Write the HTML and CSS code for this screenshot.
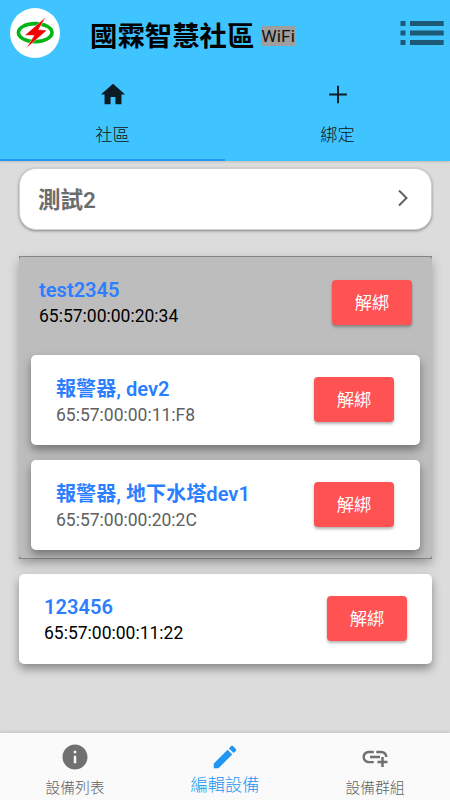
FILE: index.html
```html
<!DOCTYPE html>
<html lang="zh-Hant">
<head>
<meta charset="utf-8">
<meta name="viewport" content="width=device-width, initial-scale=1">
<title>國霖智慧社區</title>
<link rel="stylesheet" href="styles.css">
</head>
<body>
<header class="header">
  <div class="bar">
    <svg class="logo" viewBox="0 0 50 50">
      <circle cx="25" cy="25" r="25" fill="#fff"/>
      <ellipse cx="25.200" cy="24.600" rx="16.800" ry="9" fill="none" stroke="#00b414" stroke-width="3.600"/>
      <path d="M35.900 9 14.800 27.200 24 27.600 16.300 40.200 37 22.300 28.500 21.600z" fill="#f00000" stroke="#fff" stroke-width=".5"/>
    </svg>
    <h1 class="title">國霖智慧社區</h1>
    <span class="wifi">WiFi</span>
    <svg class="menu" viewBox="0 0 44 24">
      <path d="M.5 0h5v5h-5zM10 0h33.700v5H10zM.5 9.500h5v5h-5zM10 9.500h33.700v5H10zM.5 19h5v5h-5zM10 19h33.700v5H10z"/>
    </svg>
  </div>
  <nav class="tabs">
    <a class="tab tab-active">
      <svg class="tab-icon" viewBox="0 0 24 24"><path d="M10 20v-6h4v6h5v-8h3L12 3 2 12h3v8z"/></svg>
      <span>社區</span>
    </a>
    <a class="tab">
      <svg class="tab-icon" viewBox="0 0 24 24"><path d="M19.300 12.800h-6.500v6.500h-1.600v-6.500H4.700v-1.600h6.500V4.700h1.600v6.500h6.500z"/></svg>
      <span>綁定</span>
    </a>
  </nav>
</header>
<main class="content">
  <div class="selector">
    <span>測試2</span>
    <svg class="chevron" viewBox="0 0 12 18"><path d="M2 1.500 9.500 9 2 16.500"/></svg>
  </div>
  <section class="group">
    <div class="group-body">
      <div class="row group-head">
        <div><div class="name">test2345</div><div class="mac">65:57:00:00:20:34</div></div>
        <button class="unbind">解綁</button>
      </div>
      <div class="row card">
        <div class="info"><div class="name">報警器, dev2</div><div class="mac mac-muted">65:57:00:00:11:F8</div></div>
        <button class="unbind">解綁</button>
      </div>
      <div class="row card">
        <div class="info"><div class="name">報警器, 地下水塔dev1</div><div class="mac mac-muted">65:57:00:00:20:2C</div></div>
        <button class="unbind">解綁</button>
      </div>
    </div>
  </section>
  <div class="row card">
    <div class="info"><div class="name">123456</div><div class="mac">65:57:00:00:11:22</div></div>
    <button class="unbind">解綁</button>
  </div>
</main>
<nav class="bottom">
  <a class="item">
    <svg class="item-icon" viewBox="0 0 24 24"><path d="M12 2C6.480 2 2 6.480 2 12s4.480 10 10 10 10-4.480 10-10S17.520 2 12 2zm1 15h-2v-6h2v6zm0-8h-2V7h2v2z"/></svg>
    <span>設備列表</span>
  </a>
  <a class="item item-active">
    <svg class="item-icon" viewBox="0 0 24 24"><path d="M3 17.250V21h3.750L17.810 9.940l-3.750-3.750L3 17.250zM20.710 7.040c.39-.39.39-1.020 0-1.410l-2.340-2.340c-.39-.39-1.020-.39-1.410 0l-1.830 1.830 3.750 3.750 1.830-1.830z"/></svg>
    <span>編輯設備</span>
  </a>
  <a class="item">
    <svg class="item-icon" viewBox="0 0 24 24"><path d="M8 11h8v2H8v-2zm12.100 1H22c0-2.760-2.240-5-5-5h-4v1.900h4c1.710 0 3.100 1.390 3.100 3.100zM3.900 12c0-1.710 1.390-3.100 3.100-3.100h4V7H7c-2.760 0-5 2.240-5 5s2.240 5 5 5h4v-1.900H7c-1.710 0-3.100-1.390-3.100-3.100zM19 12h-2v3h-3v2h3v3h2v-3h3v-2h-3v-3z"/></svg>
    <span>設備群組</span>
  </a>
</nav>
</body>
</html>
```
FILE: styles.css
```css
* { box-sizing: border-box; }

body {
  margin: 0;
  height: 800px;
  display: flex;
  flex-direction: column;
  overflow: hidden;
  background: #dcdcdc;
  font-family: Roboto, "Noto Sans CJK TC", sans-serif;
}

svg { display: block; flex: none; }

.header {
  height: 160.5px;
  flex: none;
  background: #40c4ff;
  box-shadow: 0 1px 2px rgba(0, 0, 0, .15);
}

.bar {
  height: 72px;
  display: flex;
  align-items: center;
  padding: 0 6px 6px 10px;
}

.logo { width: 50px; height: 50px; }

.title {
  margin: 7px 0 0 30px;
  font-size: 27.400px;
  line-height: 40px;
  font-weight: 600;
  color: #000;
}

.wifi {
  margin: 6px 0 0 7px;
  height: 20px;
  background: #9e9e9e;
  color: #111;
  font-size: 17.400px;
  line-height: 21px;
}

.menu {
  width: 44px;
  height: 24px;
  margin-left: auto;
  fill: rgba(0, 0, 0, .54);
}

.tabs { display: flex; height: 88.500px; }

.tab {
  flex: 1;
  display: flex;
  flex-direction: column;
  align-items: center;
  padding-top: 8px;
  font-size: 17.300px;
  line-height: 27px;
  font-weight: 300;
  color: #111;
}

.tab-active { border-bottom: 2px solid #2196f3; }

.tab-icon { width: 30px; height: 29px; margin-bottom: 13px; fill: #0b1c24; }

.content { flex: 1; padding: 7px 18px 0 19px; }

.selector {
  display: flex;
  align-items: center;
  justify-content: space-between;
  height: 62px;
  padding: 0 22px 1px 18px;
  border: 1px solid #d0d0d0;
  border-radius: 17px;
  background: #fff;
  box-shadow: 0 1px 3px rgba(0, 0, 0, .4);
  color: #6c6c6c;
  font-size: 22.500px;
  font-weight: 600;
}

.chevron { width: 12px; height: 18px; fill: none; stroke: #616161; stroke-width: 2; }

.group {
  height: 303px;
  margin: 26px 0 15px;
  padding: 1px 0;
  background: #858585;
  box-shadow: 0 5px 10px rgba(0, 0, 0, .28);
}

.group-body {
  height: 301px;
  padding: 0 12px;
  border-radius: 3px;
  background: #bdbdbd;
}

.row { display: flex; align-items: center; justify-content: space-between; }

.group-head { height: 98px; padding: 0 8px 6px; }

.card {
  height: 90px;
  padding: 0 25px;
  border-radius: 5px;
  background: #fff;
  box-shadow: 0 5px 10px rgba(0, 0, 0, .38);
}

.info { padding-top: 3px; }

.group .card { padding-right: 26px; }
.group .card + .card { margin-top: 15px; }
.group .info { padding-top: 2px; }
.group .info .name { line-height: 28px; }
.group .info .mac { line-height: 24px; }

.name {
  color: #2b7fff;
  font-size: 20.100px;
  line-height: 27px;
  font-weight: 600;
}

.group-head .name { padding-top: 1px; }

.mac { color: #000; font-size: 17.500px; line-height: 25px; }
.mac-muted { color: #606060; }

.unbind {
  width: 80px;
  height: 45px;
  padding: 0;
  border: 0;
  border-radius: 4px;
  background: #ff5252;
  box-shadow: 0 2px 3px rgba(0, 0, 0, .3);
  color: #fff;
  font: 400 17.300px/46px Roboto, "Noto Sans CJK TC", sans-serif;
}

.bottom {
  flex: none;
  display: flex;
  height: 67px;
  background: #fafafa;
  box-shadow: 0 -1px 3px rgba(0, 0, 0, .12);
  font-weight: 300;
}

.item {
  flex: 1;
  display: flex;
  flex-direction: column;
  align-items: center;
  padding-top: 8.500px;
  color: #616161;
  font-size: 14.800px;
  line-height: 32px;
}

.item-icon { width: 30px; height: 30px; fill: #707070; }

.item-active { color: #2196f3; font-size: 17.250px; line-height: 27px; }
.item-active .item-icon { fill: #2196f3; }
```
